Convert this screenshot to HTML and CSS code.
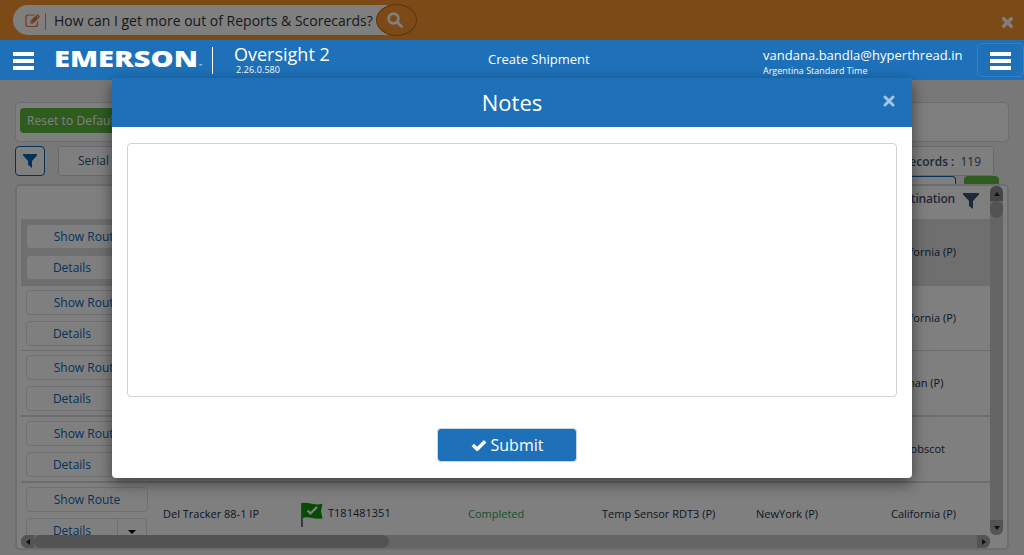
FILE: index.html
```html
<!DOCTYPE html>
<html lang="en">
<head>
<meta charset="utf-8">
<title>Oversight 2</title>
<link rel="stylesheet" href="styles.css">
</head>
<body>
<div class="promo">
  <div class="promo-pill">
    <svg class="edit-icon" viewBox="0 0 16 15"><path d="M12.500 8.500V11.500Q12.500 13.500 10.500 13.500H3Q1 13.500 1 11.500V4Q1 2 3 2H9.500" fill="none" stroke="currentColor" stroke-width="1.200"/><path d="M5.500 10.500V7.800L12.300 1L15 3.700L8.200 10.500Z" fill="currentColor"/><path d="M6.500 8.300L7.900 9.700M11 2.500L13.500 5" stroke="#fff" stroke-width=".7"/></svg>
    <span class="promo-bar"></span>
    <span class="promo-text">How can I get more out of Reports &amp; Scorecards?</span>
    <span class="promo-search"><svg viewBox="0 0 16 16"><circle cx="6.500" cy="6.500" r="4.900" fill="none" stroke="currentColor" stroke-width="2.600"/><path d="M10 10L14.500 14.500" stroke="currentColor" stroke-width="2.800" stroke-linecap="round"/></svg></span>
  </div>
  <svg class="promo-close" viewBox="0 0 12 12"><path d="M2.500 2.500L9.500 9.500M9.500 2.500L2.500 9.500" stroke="currentColor" stroke-width="3.200" stroke-linecap="round"/></svg>
</div>

<header class="topbar">
  <div class="burger"><i></i><i></i><i></i></div>
  <svg class="logo" viewBox="0 0 150 24"><text x="0" y="19.300" textLength="144" lengthAdjust="spacingAndGlyphs" class="logo-text">EMERSON</text><text x="145" y="19" class="logo-tm">™</text></svg>
  <span class="divider"></span>
  <div class="product"><div class="product-name">Oversight 2</div><div class="version">2.26.0.580</div></div>
  <div class="page-name">Create Shipment</div>
  <div class="user"><div class="email">vandana.bandla@hyperthread.in</div><div class="zone">Argentina Standard Time</div></div>
  <div class="menu-button"><div class="burger"><i></i><i></i><i></i></div></div>
</header>

<main class="content">
  <section class="toolbar"><button class="reset">Reset to Default</button></section>
  <section class="filters">
    <button class="filter-button"><svg viewBox="0 0 14 14"><path d="M0 0H14V1.500L9 7V14L5 10.800V7L0 1.500Z" fill="currentColor"/></svg></button>
    <div class="serial">Serial Number</div>
    <div class="records-col">
      <div class="records"><b>Records :</b><span>119</span></div>
      <div class="peek"><span class="peek-input"></span><span class="peek-go"></span></div>
    </div>
  </section>
  <section class="panel">
    <div class="table">
      <div class="head"><span class="head-cell">Destination</span><svg viewBox="0 0 16 16"><path d="M0 0H16V1.500L10 8V16L6 13V8L0 1.500Z" fill="currentColor"/></svg></div>
      <div class="row selected"><div class="actions"><button>Show Route</button><div class="split"><button>Details</button><button class="caret"></button></div></div><span class="dest">California (P)</span></div>
      <div class="row thin"><div class="actions"><button>Show Route</button><div class="split"><button>Details</button><button class="caret"></button></div></div><span class="dest">California (P)</span></div>
      <div class="row"><div class="actions"><button>Show Route</button><div class="split"><button>Details</button><button class="caret"></button></div></div><span class="dest">Wuhan (P)</span></div>
      <div class="row"><div class="actions"><button>Show Route</button><div class="split"><button>Details</button><button class="caret"></button></div></div><span class="dest">Penobscot</span></div>
      <div class="row last"><div class="actions"><button>Show Route</button><div class="split"><button>Details</button><button class="caret"></button></div></div>
        <span>Del Tracker 88-1 IP</span>
        <span class="trip"><svg viewBox="0 0 22 25"><path d="M1 1V25" stroke="#111" stroke-width="1.200"/><path d="M1 1.200C7-.5 12 4 21.500 1.800L20 9L21.500 16.500C12 18 8 13.500 1.500 16Z" fill="#0a9b0a"/><path d="M6.500 8.500L9.500 11.500L16 5" fill="none" stroke="#fff" stroke-width="2.200"/></svg>T181481351</span>
        <span class="done">Completed</span><span>Temp Sensor RDT3 (P)</span><span>NewYork (P)</span><span class="dest">California (P)</span></div>
    </div>
    <div class="vscroll"><i class="up"></i><b></b><i class="down"></i></div>
    <div class="hscroll"><i class="left"></i><b></b><i class="right"></i></div>
  </section>
</main>

<div class="backdrop"></div>
<div class="modal">
  <div class="modal-head"><h1>Notes</h1><svg class="modal-close" viewBox="0 0 12 12"><path d="M2 2L10 10M10 2L2 10" stroke="currentColor" stroke-width="2.900" stroke-linecap="round"/></svg></div>
  <div class="modal-body">
    <textarea class="notes"></textarea>
    <button class="submit"><svg viewBox="0 0 16 12"><path d="M1.800 6L6.200 10.200L14.200 2.200" fill="none" stroke="currentColor" stroke-width="3.500"/></svg>Submit</button>
  </div>
</div>
</body>
</html>
```
FILE: styles.css
```css
* { box-sizing: border-box; }
body { margin: 0; width: 1024px; height: 555px; overflow: hidden; position: relative; background: #f0f0f0; font-family: "Open Sans", "Noto Sans", sans-serif; font-size: 11px; color: #1c2c50; }
button { font-family: inherit; margin: 0; padding: 0; }
svg { display: block; flex: none; }

.promo { height: 40px; background: #f8942e; display: flex; align-items: center; justify-content: space-between; padding: 0 10px 0 13px; }
.promo-pill { width: 404px; height: 30px; border-radius: 15px; background: linear-gradient(to right, #fff 375px, transparent 375px); display: flex; align-items: center; padding-left: 12px; }
.edit-icon { width: 16px; height: 15px; color: #e8743c; }
.promo-bar { width: 1px; height: 17px; background: #f08a3c; margin: 2px 8px 0 4px; }
.promo-text { font-size: 14px; color: #333; white-space: nowrap; width: 322px; }
.promo-search { width: 41px; height: 32px; padding-right: 3px; border: 1px solid #b86a1c; border-radius: 50%; background: #f8942e; display: flex; align-items: center; justify-content: center; color: #fff; flex: none; }
.promo-search svg { width: 16px; height: 16px; }
.promo-close { width: 13px; height: 13px; color: #fff; margin-top: 5px; }

.topbar { position: relative; z-index: 2; height: 40px; background: #1e71b9; color: #fff; display: flex; align-items: center; padding-left: 13px; }
.burger { width: 21px; height: 18px; margin-top: 1px; display: flex; flex-direction: column; justify-content: space-between; }
.burger i { height: 4px; background: #fff; }
.logo { width: 150px; height: 24px; margin-left: 20px; }
.logo-text { font: 800 22.500px "Open Sans", sans-serif; fill: #fff; }
.logo-tm { font: 4px "Open Sans", sans-serif; fill: #fff; }
.divider { width: 1px; height: 27px; background: #fff; margin: 0 21px 0 8px; }
.product { width: 254px; padding-bottom: 1px; }
.product-name { font-size: 18px; line-height: 21px; }
.version { font-size: 9px; line-height: 10px; padding-left: 2px; letter-spacing: .1px; }
.page-name { width: 275px; font-size: 13px; padding-bottom: 2px; }
.user { width: 214px; padding-top: 3px; }
.email { font-size: 13px; line-height: 17px; letter-spacing: .02px; }
.zone { font-size: 9px; line-height: 13px; }
.menu-button { width: 47px; height: 34px; border: 1px solid #3581c4; border-radius: 5px; display: flex; align-items: center; justify-content: center; }

.content { padding: 22px 15px 0; }
.toolbar { height: 40px; width: 994px; border: 1px solid #d8dade; border-radius: 5px; background: #fff; padding: 5px 4px; }
.reset { width: 120px; height: 25px; border: 0; border-radius: 4px; background: #5cb83c; color: #fff; font-size: 12px; letter-spacing: .1px; text-align: left; padding-left: 7px; white-space: nowrap; overflow: hidden; }
.filters { height: 42px; padding-top: 4px; display: flex; }
.filter-button { width: 30px; height: 30px; border: 1px solid #0b65b5; border-radius: 4px; background: #fff; color: #0b65b5; display: flex; align-items: center; justify-content: center; }
.filter-button svg { width: 14px; height: 14px; }
.serial { width: 150px; height: 30px; margin-left: 13px; border: 1px solid #d0d3da; border-radius: 3px; background: #fff; padding-left: 19px; font-size: 12px; line-height: 28px; color: #3e5279; }
.records-col { margin-left: 600px; width: 191px; }
.records { width: 186px; height: 30px; border: 1px solid #d0d3da; border-radius: 3px; background: #fff; display: flex; gap: 6px; justify-content: flex-end; padding: 1px 12px 0 0; font-size: 12px; line-height: 28px; color: #3e5279; }
.records b { font-weight: 600; }
.peek { height: 8px; display: flex; gap: 8px; }
.peek-input { width: 148px; border: 1px solid #0b65b5; border-bottom: 0; border-radius: 4px 4px 0 0; background: #fff; }
.peek-go { width: 35px; background: #5cb83c; border-radius: 4px 4px 0 0; }

.panel { width: 994px; height: 366px; border: 2px solid #d6dbe3; border-radius: 5px; background: #fff; padding-left: 4px; display: grid; grid-template-columns: 969px 13px; grid-template-rows: 349px 13px; overflow: hidden; }
.table { overflow: hidden; }
.head { height: 33px; padding: 4px 10px 0 870px; display: flex; align-items: flex-start; color: #3e5279; font-weight: 600; font-size: 12px; letter-spacing: -.2px; line-height: 18px; }
.head-cell { width: 72px; flex: none; display: flex; justify-content: flex-end; padding-right: 8px; }
.head svg { width: 16px; height: 16px; margin-top: 3px; }
.row { height: 66px; padding: 4px 0 0 5px; border-bottom: 2px solid #d6dbe3; display: grid; grid-template-columns: 137px 138px 167px 134px 154px 135px 99px; }
.row.thin { height: 65px; border-bottom-width: 1px; }
.row.selected { height: 67px; padding-top: 5px; background: #dedede; border-bottom-width: 1px; }
.row > span { padding-top: 20px; line-height: 16px; white-space: nowrap; }
.row.last > span { padding-top: 19px; }
.row .dest { grid-column: 7; }
.row .done { color: #2aa35a; }
.row .trip { display: flex; gap: 5px; }
.row.last > .trip { padding-top: 18px; }
.trip svg { width: 22px; height: 25px; margin-top: -3px; }
.actions { display: flex; flex-direction: column; gap: 6px; }
.actions button { width: 122px; height: 25px; border: 1px solid #dcdfe5; border-radius: 4px; background: #fff; color: #0b65b5; font-size: 12px; }
.selected .actions button { border-color: #dedede; }
.split { display: flex; }
.actions .split button { width: 92px; border-radius: 4px 0 0 4px; }
.actions .split .caret { width: 30px; margin-left: -1px; border-radius: 0 4px 4px 0; display: flex; align-items: center; justify-content: center; }
.caret::after { content: ""; border: 4px solid transparent; border-top-color: #000; border-bottom: 0; margin-top: 3px; }

.vscroll { display: flex; flex-direction: column; background: #cbcbcb; border-radius: 6px; }
.vscroll i, .hscroll i { display: flex; align-items: center; justify-content: center; background: #a8a8a8; flex: none; }
.vscroll i { height: 15px; }
.vscroll b { height: 17px; background: #a6a6a6; border-radius: 7px; margin-bottom: auto; }
.vscroll .up { border-radius: 6px 6px 0 0; background: #8c8c8c; }
.vscroll .down { border-radius: 0 0 6px 6px; }
.hscroll { display: flex; background: #cbcbcb; border-radius: 6px; }
.hscroll i { width: 13px; }
.hscroll b { width: 355px; background: #a6a6a6; border-radius: 7px; margin-right: auto; }
.hscroll .left { border-radius: 6px 0 0 6px; }
.hscroll .right { border-radius: 0 6px 6px 0; }
.up::after, .down::after, .left::after, .right::after { content: ""; border: 3px solid transparent; }
.up::after { border-bottom: 4px solid #222; border-top: 0; }
.down::after { border-top: 4px solid #222; border-bottom: 0; }
.left::after { border-right: 4px solid #222; border-left: 0; }
.right::after { border-left: 4px solid #222; border-right: 0; }

.backdrop { position: absolute; inset: 0; z-index: 1; background: rgba(0, 0, 0, .5); }
.modal { position: absolute; z-index: 3; left: 112px; top: 78px; width: 800px; height: 400px; background: #fff; border-radius: 4px; box-shadow: 0 5px 15px rgba(0, 0, 0, .5); }
.modal-head { height: 49px; background: #1e71b9; color: #fff; position: relative; }
.modal-head h1 { margin: 0; font-size: 22px; font-weight: 400; text-align: center; line-height: 49px; }
.modal-close { position: absolute; right: 17px; top: 17px; width: 12px; height: 12px; color: #a5c6e3; }
.modal-body { padding: 16px 15px 0; display: flex; flex-direction: column; align-items: center; gap: 31px; }
.notes { display: block; width: 770px; height: 254px; border: 1px solid #ced4da; border-radius: 4px; background: #fff; resize: none; outline: none; }
.submit { width: 140px; height: 34px; margin-right: 10px; border: 1px solid #c9d6e6; border-radius: 4px; background: #1e71b9; color: #fff; font-size: 16px; display: flex; align-items: center; justify-content: center; gap: 4px; }
.submit svg { width: 16px; height: 12px; }
```
